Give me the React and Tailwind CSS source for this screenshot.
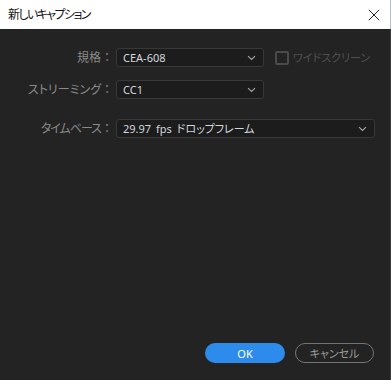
import { useState } from 'react';

const jp = "font-['Noto_Sans','Noto_Sans_CJK_JP',sans-serif] [font-feature-settings:'palt']";

function Chevron() {
  return (
    <svg width="9" height="6" viewBox="0 0 9 6" className="text-[#a8a8a8]">
      <path d="M1 1.2 L4.5 4.5 L8 1.2" fill="none" stroke="currentColor" strokeWidth="1.1" />
    </svg>
  );
}

function Select({ value, width }) {
  return (
    <div className={`${width} h-[19px] flex items-center justify-between pl-[6px] pr-[7px] bg-[#1c1c1c] border border-[#383838] rounded-[3px]`}>
      <span className="text-[11px] text-[#d2d8de] leading-none [word-spacing:2px]">{value}</span>
      <Chevron />
    </div>
  );
}

// label text ends at x≈101, full-width colon sits centred in its own 12px cell
function Label({ children, tight }) {
  return (
    <div className="w-[113px] shrink-0 flex justify-end items-center text-[12px] text-[#8a8a8a] leading-none">
      <span className={tight ? 'tracking-[-1px]' : ''}>{children}</span>
      <span className="w-[12px] text-center [font-feature-settings:normal]">：</span>
    </div>
  );
}

export default function App() {
  const [wide, setWide] = useState(false);

  return (
    <div className={`w-[391px] h-[380px] flex flex-col overflow-hidden ${jp}`}>
      {/* Title bar */}
      <div className="h-[29px] shrink-0 flex items-center justify-between pl-2 pr-[10px] bg-white border-r border-[#b4bfcb]">
        <span className="text-[12px] tracking-[-1.6px] text-[#111] leading-none">新しいキャプション</span>
        <svg width="12" height="12" viewBox="0 0 12 12" className="mt-[1px]">
          <path d="M0.8 0.8 L11.2 11.2 M11.2 0.8 L0.8 11.2" stroke="#222" strokeWidth="1" />
        </svg>
      </div>

      {/* Body */}
      <div className="flex-1 flex flex-col bg-[#232323] border-r border-[#3c3c3c] pt-[19px] pb-[17px]">
        <div className="flex items-center">
          <Label>規格</Label>
          <div className="ml-[3px]">
            <Select value="CEA-608" width="w-[148px]" />
          </div>
          <button
            type="button"
            onClick={() => setWide(!wide)}
            className="ml-[11px] flex items-center gap-[4px] cursor-default"
          >
            <span className="w-[14px] h-[14px] rounded-[2px] border-2 border-[#4a4a4a]" />
            <span className="text-[11px] text-[#505050] leading-none">ワイドスクリーン</span>
          </button>
        </div>

        <div className="flex items-center mt-[13px]">
          <Label>ストリーミング</Label>
          <div className="ml-[3px]">
            <Select value="CC1" width="w-[148px]" />
          </div>
        </div>

        <div className="flex items-center mt-[20px]">
          <Label tight>タイムベース</Label>
          <div className="ml-[3px]">
            <Select value="29.97 fps ドロップフレーム" width="w-[259px]" />
          </div>
        </div>

        <div className="flex-1" />

        <div className="flex items-center justify-end gap-[10px] pr-[16px]">
          <button className="w-[80px] h-[20px] rounded-full bg-[#2d8ceb] text-[11px] text-white leading-none">OK</button>
          <button className="w-[79px] h-[20px] rounded-full border border-[#747474] text-[11px] text-[#9c9c9c] leading-none">キャンセル</button>
        </div>
      </div>
    </div>
  );
}
